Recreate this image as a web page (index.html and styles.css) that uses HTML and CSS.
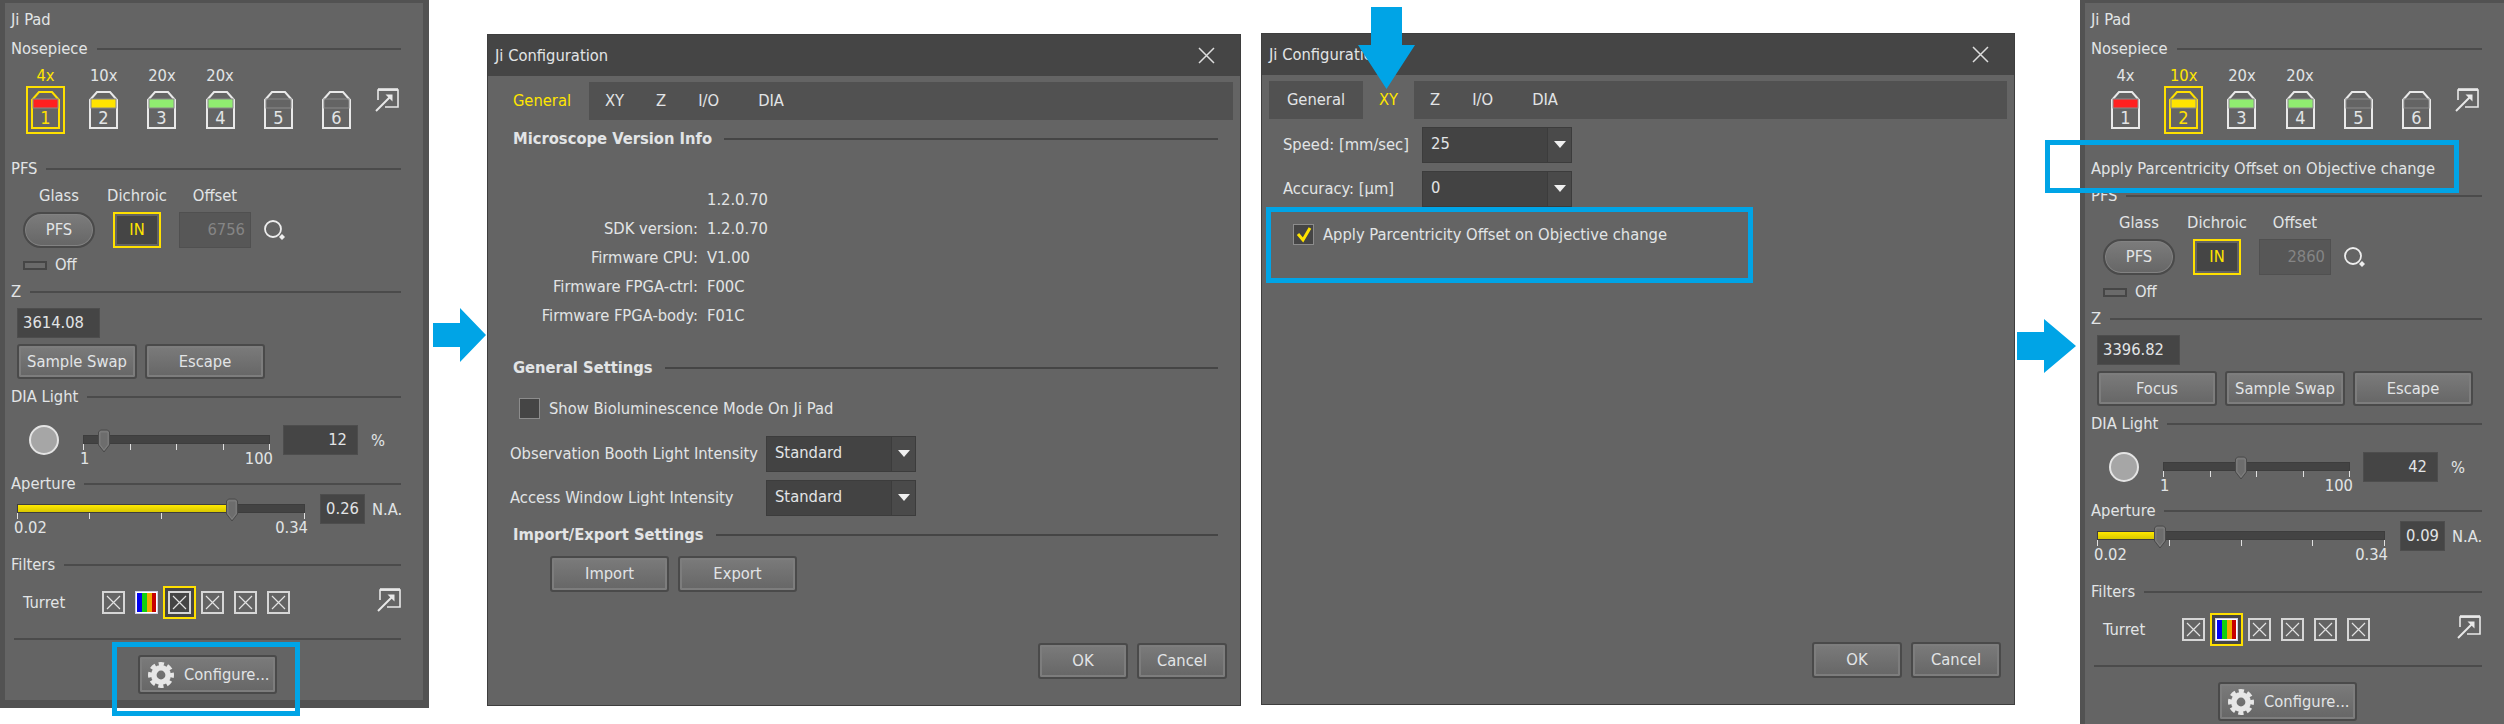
FILE: index.html
```html
<!DOCTYPE html>
<html lang="en">
<head>
<meta charset="utf-8">
<title>Ji Pad configuration</title>
<link rel="stylesheet" href="styles.css">
</head>
<body>
<svg width="0" height="0" class="defs">
  <defs>
    <g id="popout"><path d="M3 12V2H23V19H10" fill="none" stroke="#e8e8e8" stroke-width="1.6"/><path d="M3 1.5H23" stroke="#e8e8e8" stroke-width="2.6"/><path d="M1 23L16 8" stroke="#e8e8e8" stroke-width="2"/><path d="M10.5 6.5H17.5V13.5Z" fill="#e8e8e8"/></g>
    <g id="xbox"><rect x="1" y="1" width="21" height="21" fill="none" stroke="#d6d6d6" stroke-width="2"/><path d="M5 5L18 18M18 5L5 18" stroke="#e2e2e2" stroke-width="1.2"/></g>
    <g id="rainbow"><rect x=".5" y=".5" width="22" height="22" fill="#fff" stroke="#cfcfe8"/><rect x="2" y="2" width="5" height="19" fill="#0000f0"/><rect x="7" y="2" width="5" height="19" fill="#10d010"/><rect x="12" y="2" width="5" height="19" fill="#f0a800"/><rect x="17" y="2" width="4" height="19" fill="#c80000"/></g>
    <g id="thumb"><path d="M1.5 3L3.5 1H10.5L12.5 3V16L7 23L1.5 16Z" fill="#757575" stroke="#4a4a4a"/><path d="M3 3H11V15.5L7 21L3 15.5Z" fill="#6d6d6d" stroke="#868686" stroke-width=".6"/></g>
    <g id="gear"><circle cx="13" cy="13" r="7.2" fill="none" stroke="#e6e6e6" stroke-width="5.6"/><circle cx="13" cy="13" r="11" fill="none" stroke="#e6e6e6" stroke-width="4" stroke-dasharray="5.2 3.44" stroke-dashoffset="2.6"/></g>
    <g id="lens"><circle cx="9" cy="9" r="8" fill="none" stroke="#eeeeee" stroke-width="1.8"/><path d="M18 14L21 17L18 20L15 17Z" fill="#eeeeee"/></g>
  </defs>
</svg>

<section class="panel panel-a">
  <div class="pad-title">Ji Pad</div>
  <div class="head"><span>Nosepiece</span><i></i></div>
  <div class="noses">
    <div class="nose on"><span class="mag">4x</span><div class="slot"><svg width="29" height="38" viewBox="0 0 29 38"><path class="hull" d="M1 37V9L8 1H21L28 9V37Z"/><rect class="band" x="2" y="8" width="25" height="9" fill="#ff2020"/><text x="14.5" y="33" text-anchor="middle">1</text></svg></div></div>
    <div class="nose"><span class="mag">10x</span><div class="slot"><svg width="29" height="38" viewBox="0 0 29 38"><path class="hull" d="M1 37V9L8 1H21L28 9V37Z"/><rect class="band" x="2" y="8" width="25" height="9" fill="#ffe400"/><text x="14.5" y="33" text-anchor="middle">2</text></svg></div></div>
    <div class="nose"><span class="mag">20x</span><div class="slot"><svg width="29" height="38" viewBox="0 0 29 38"><path class="hull" d="M1 37V9L8 1H21L28 9V37Z"/><rect class="band" x="2" y="8" width="25" height="9" fill="#90ec70"/><text x="14.5" y="33" text-anchor="middle">3</text></svg></div></div>
    <div class="nose"><span class="mag">20x</span><div class="slot"><svg width="29" height="38" viewBox="0 0 29 38"><path class="hull" d="M1 37V9L8 1H21L28 9V37Z"/><rect class="band" x="2" y="8" width="25" height="9" fill="#90ec70"/><text x="14.5" y="33" text-anchor="middle">4</text></svg></div></div>
    <div class="nose"><span class="mag"></span><div class="slot"><svg width="29" height="38" viewBox="0 0 29 38"><path class="hull" d="M1 37V9L8 1H21L28 9V37Z"/><rect class="band" x="2" y="8" width="25" height="9" fill="none"/><text x="14.5" y="33" text-anchor="middle">5</text></svg></div></div>
    <div class="nose"><span class="mag"></span><div class="slot"><svg width="29" height="38" viewBox="0 0 29 38"><path class="hull" d="M1 37V9L8 1H21L28 9V37Z"/><rect class="band" x="2" y="8" width="25" height="9" fill="none"/><text x="14.5" y="33" text-anchor="middle">6</text></svg></div></div>
    <svg class="pop pop-nose" width="24" height="24" viewBox="0 0 24 24"><use href="#popout"/></svg>
  </div>
  <div class="head head-pfs"><span>PFS</span><i></i></div>
  <div class="pfs">
    <span class="cap">Glass</span><span class="cap">Dichroic</span><span class="cap">Offset</span><span></span>
    <button class="pill">PFS</button>
    <div class="in"><b>IN</b></div>
    <div class="offset">6756</div>
    <svg width="22" height="21" viewBox="0 0 22 21"><use href="#lens"/></svg>
  </div>
  <div class="off"><i></i><span>Off</span></div>
  <div class="head head-z"><span>Z</span><i></i></div>
  <div class="field zval">3614.08</div>
  <div class="btns"><button class="btn">Sample Swap</button><button class="btn">Escape</button></div>
  <div class="head head-dia"><span>DIA Light</span><i></i></div>
  <div class="dia">
    <div class="lamp"></div>
    <div class="slider dia-slider">
      <div class="track"></div>
      <svg class="thumb" style="left:11%" width="14" height="24" viewBox="0 0 14 24"><use href="#thumb"/></svg>
      <div class="ticks"><i></i><i></i><i></i><i></i><i></i></div>
      <div class="ends"><span>1</span><span>100</span></div>
    </div>
    <div class="field pct">12</div>
    <span class="unit">%</span>
  </div>
  <div class="head head-ap"><span>Aperture</span><i></i></div>
  <div class="ap">
    <div class="slider ap-slider">
      <div class="track"><div class="fill" style="width:74.7%"></div></div>
      <svg class="thumb" style="left:74.7%" width="14" height="24" viewBox="0 0 14 24"><use href="#thumb"/></svg>
      <div class="ticks"><i></i><i></i><i></i><i></i><i></i></div>
      <div class="ends"><span>0.02</span><span>0.34</span></div>
    </div>
    <div class="field na">0.26</div>
    <span class="unit-na">N.A.</span>
  </div>
  <div class="head head-fil"><span>Filters</span><i></i></div>
  <div class="filters">
    <span class="turret">Turret</span>
    <div class="cell"><svg width="23" height="23" viewBox="0 0 23 23"><use href="#xbox"/></svg></div>
    <div class="cell"><svg width="23" height="23" viewBox="0 0 23 23"><use href="#rainbow"/></svg></div>
    <div class="cell on"><svg width="23" height="23" viewBox="0 0 23 23"><use href="#xbox"/></svg></div>
    <div class="cell"><svg width="23" height="23" viewBox="0 0 23 23"><use href="#xbox"/></svg></div>
    <div class="cell"><svg width="23" height="23" viewBox="0 0 23 23"><use href="#xbox"/></svg></div>
    <div class="cell"><svg width="23" height="23" viewBox="0 0 23 23"><use href="#xbox"/></svg></div>
    <svg class="pop pop-fil" width="24" height="24" viewBox="0 0 24 24"><use href="#popout"/></svg>
  </div>
  <div class="sep"></div>
  <button class="btn cfg"><svg width="26" height="26" viewBox="0 0 26 26"><use href="#gear"/></svg><span>Configure...</span></button>
</section>

<section class="dialog d1">
  <div class="titlebar"><span>Ji Configuration</span><svg width="17" height="17" viewBox="0 0 17 17"><path d="M1 1L16 16M16 1L1 16" stroke="#dddddd" stroke-width="1.5"/></svg></div>
  <div class="tabs"><span class="tab sel first">General</span><span class="tab">XY</span><span class="tab">Z</span><span class="tab tab-io">I/O</span><span class="tab">DIA</span><span class="tab-rest"></span></div>
  <div class="shead sh1"><span>Microscope Version Info</span><i></i></div>
  <div class="info">
    <span></span><span>1.2.0.70</span>
    <span>SDK version:</span><span>1.2.0.70</span>
    <span>Firmware CPU:</span><span>V1.00</span>
    <span>Firmware FPGA-ctrl:</span><span>F00C</span>
    <span>Firmware FPGA-body:</span><span>F01C</span>
  </div>
  <div class="shead sh2"><span>General Settings</span><i></i></div>
  <div class="check c1"><span class="box"></span><span>Show Bioluminescence Mode On Ji Pad</span></div>
  <div class="row r1"><span class="rl">Observation Booth Light Intensity</span><div class="select"><span>Standard</span><em></em></div></div>
  <div class="row r2"><span class="rl">Access Window Light Intensity</span><div class="select"><span>Standard</span><em></em></div></div>
  <div class="shead sh3"><span>Import/Export Settings</span><i></i></div>
  <div class="imp"><button class="btn">Import</button><button class="btn">Export</button></div>
  <div class="foot"><button class="btn">OK</button><button class="btn">Cancel</button></div>
</section>

<section class="dialog d2">
  <div class="titlebar"><span>Ji Configuration</span><svg width="17" height="17" viewBox="0 0 17 17"><path d="M1 1L16 16M16 1L1 16" stroke="#dddddd" stroke-width="1.5"/></svg></div>
  <div class="tabs"><span class="tab first">General</span><span class="tab sel">XY</span><span class="tab">Z</span><span class="tab tab-io">I/O</span><span class="tab">DIA</span><span class="tab-rest"></span></div>
  <div class="xrow x1"><span class="xl">Speed: [mm/sec]</span><div class="select"><span>25</span><em></em></div></div>
  <div class="xrow x2"><span class="xl">Accuracy: [µm]</span><div class="select"><span>0</span><em></em></div></div>
  <div class="check c2"><span class="box"><svg width="18" height="18" viewBox="0 0 18 18"><path d="M3 8L8 14L15 2" fill="none" stroke="#ffe400" stroke-width="3"/></svg></span><span>Apply Parcentricity Offset on Objective change</span></div>
  <div class="foot"><button class="btn">OK</button><button class="btn">Cancel</button></div>
</section>

<section class="panel panel-b">
  <div class="pad-title">Ji Pad</div>
  <div class="head"><span>Nosepiece</span><i></i></div>
  <div class="noses">
    <div class="nose"><span class="mag">4x</span><div class="slot"><svg width="29" height="38" viewBox="0 0 29 38"><path class="hull" d="M1 37V9L8 1H21L28 9V37Z"/><rect class="band" x="2" y="8" width="25" height="9" fill="#ff2020"/><text x="14.5" y="33" text-anchor="middle">1</text></svg></div></div>
    <div class="nose on"><span class="mag">10x</span><div class="slot"><svg width="29" height="38" viewBox="0 0 29 38"><path class="hull" d="M1 37V9L8 1H21L28 9V37Z"/><rect class="band" x="2" y="8" width="25" height="9" fill="#ffe400"/><text x="14.5" y="33" text-anchor="middle">2</text></svg></div></div>
    <div class="nose"><span class="mag">20x</span><div class="slot"><svg width="29" height="38" viewBox="0 0 29 38"><path class="hull" d="M1 37V9L8 1H21L28 9V37Z"/><rect class="band" x="2" y="8" width="25" height="9" fill="#90ec70"/><text x="14.5" y="33" text-anchor="middle">3</text></svg></div></div>
    <div class="nose"><span class="mag">20x</span><div class="slot"><svg width="29" height="38" viewBox="0 0 29 38"><path class="hull" d="M1 37V9L8 1H21L28 9V37Z"/><rect class="band" x="2" y="8" width="25" height="9" fill="#90ec70"/><text x="14.5" y="33" text-anchor="middle">4</text></svg></div></div>
    <div class="nose"><span class="mag"></span><div class="slot"><svg width="29" height="38" viewBox="0 0 29 38"><path class="hull" d="M1 37V9L8 1H21L28 9V37Z"/><rect class="band" x="2" y="8" width="25" height="9" fill="none"/><text x="14.5" y="33" text-anchor="middle">5</text></svg></div></div>
    <div class="nose"><span class="mag"></span><div class="slot"><svg width="29" height="38" viewBox="0 0 29 38"><path class="hull" d="M1 37V9L8 1H21L28 9V37Z"/><rect class="band" x="2" y="8" width="25" height="9" fill="none"/><text x="14.5" y="33" text-anchor="middle">6</text></svg></div></div>
    <svg class="pop pop-nose" width="24" height="24" viewBox="0 0 24 24"><use href="#popout"/></svg>
  </div>
  <div class="note">Apply Parcentricity Offset on Objective change</div>
  <div class="head"><span>PFS</span><i></i></div>
  <div class="pfs">
    <span class="cap">Glass</span><span class="cap">Dichroic</span><span class="cap">Offset</span><span></span>
    <button class="pill">PFS</button>
    <div class="in"><b>IN</b></div>
    <div class="offset">2860</div>
    <svg width="22" height="21" viewBox="0 0 22 21"><use href="#lens"/></svg>
  </div>
  <div class="off"><i></i><span>Off</span></div>
  <div class="head head-z"><span>Z</span><i></i></div>
  <div class="field zval">3396.82</div>
  <div class="btns"><button class="btn">Focus</button><button class="btn">Sample Swap</button><button class="btn">Escape</button></div>
  <div class="head head-dia"><span>DIA Light</span><i></i></div>
  <div class="dia">
    <div class="lamp"></div>
    <div class="slider dia-slider">
      <div class="track"></div>
      <svg class="thumb" style="left:41.5%" width="14" height="24" viewBox="0 0 14 24"><use href="#thumb"/></svg>
      <div class="ticks"><i></i><i></i><i></i><i></i><i></i></div>
      <div class="ends"><span>1</span><span>100</span></div>
    </div>
    <div class="field pct">42</div>
    <span class="unit">%</span>
  </div>
  <div class="head head-ap"><span>Aperture</span><i></i></div>
  <div class="ap">
    <div class="slider ap-slider">
      <div class="track"><div class="fill" style="width:21.9%"></div></div>
      <svg class="thumb" style="left:21.9%" width="14" height="24" viewBox="0 0 14 24"><use href="#thumb"/></svg>
      <div class="ticks"><i></i><i></i><i></i><i></i><i></i></div>
      <div class="ends"><span>0.02</span><span>0.34</span></div>
    </div>
    <div class="field na">0.09</div>
    <span class="unit-na">N.A.</span>
  </div>
  <div class="head head-fil"><span>Filters</span><i></i></div>
  <div class="filters">
    <span class="turret">Turret</span>
    <div class="cell"><svg width="23" height="23" viewBox="0 0 23 23"><use href="#xbox"/></svg></div>
    <div class="cell on"><svg width="23" height="23" viewBox="0 0 23 23"><use href="#rainbow"/></svg></div>
    <div class="cell"><svg width="23" height="23" viewBox="0 0 23 23"><use href="#xbox"/></svg></div>
    <div class="cell"><svg width="23" height="23" viewBox="0 0 23 23"><use href="#xbox"/></svg></div>
    <div class="cell"><svg width="23" height="23" viewBox="0 0 23 23"><use href="#xbox"/></svg></div>
    <div class="cell"><svg width="23" height="23" viewBox="0 0 23 23"><use href="#xbox"/></svg></div>
    <svg class="pop pop-fil" width="24" height="24" viewBox="0 0 24 24"><use href="#popout"/></svg>
  </div>
  <div class="sep"></div>
  <button class="btn cfg"><svg width="26" height="26" viewBox="0 0 26 26"><use href="#gear"/></svg><span>Configure...</span></button>
</section>

<svg class="arrow arrow-1" width="54" height="56" viewBox="0 0 54 56"><path d="M0 16H27V1L53 28L27 55V40H0Z"/></svg>
<svg class="arrow arrow-2" width="60" height="56" viewBox="0 0 60 56"><path d="M0 13H27V0L59 27L27 54V41H0Z"/></svg>
<svg class="arrow arrow-3" width="58" height="84" viewBox="0 0 58 84"><path d="M13 0H44V38H57L28.5 82L0 38H13Z"/></svg>
<div class="mark mark-1"></div>
<div class="mark mark-2"></div>
<div class="mark mark-3"></div>
</body>
</html>
```
FILE: styles.css
```css
* { box-sizing: border-box; }
html, body { margin: 0; padding: 0; }
body {
  position: relative;
  width: 2504px;
  height: 724px;
  overflow: hidden;
  background: #fff;
  color: #e2e4e6;
  font-family: "DejaVu Sans Condensed", "DejaVu Sans", sans-serif;
  font-stretch: condensed;
  font-size: 16.4px;
  line-height: 18px;
}
.defs { position: absolute; }
button { font: inherit; color: inherit; padding: 0; margin: 0; }

/* Ji Pad windows */
.panel {
  position: absolute;
  top: 0;
  display: flex;
  flex-direction: column;
  background: #646464;
  border: solid #525252;
  border-width: 3px 6px 8px 5px;
}
.panel-a { left: 0; width: 429px; height: 708px; }
.panel-b { left: 2080px; width: 424px; height: 760px; border-right-width: 0; }
.pad-title { height: 34px; padding: 8px 0 0 6px; }
.head { display: flex; align-items: center; height: 24px; padding: 0 22px 0 6px; flex: none; }
.head span { margin-right: 9px; }
.head i { flex: 1; height: 2px; background: #4b4b4b; }
.noses { display: flex; margin: 6px 0 0 21px; gap: 19.2px; height: 67px; flex: none; }
.nose { width: 39px; display: flex; flex-direction: column; align-items: center; }
.mag { height: 19px; white-space: nowrap; }
.slot { width: 39px; height: 48px; border: 2px solid transparent; display: flex; align-items: center; justify-content: center; }
.hull { fill: none; stroke: #e9e9e9; stroke-width: 2; }
.band { stroke: #8a8a8a; stroke-width: 1; }
.nose text { font-size: 18px; fill: #e2e4e6; }
.nose.on .mag { color: #ffe600; }
.nose.on .slot { border-color: #ffe000; }
.nose.on .hull { stroke: #ffe000; }
.nose.on text { fill: #ffe000; }
.pop { flex: none; }
.pop-nose { margin: 21px 0 0 0; }
.head-pfs { margin-top: 23px; }
.note { height: 50px; padding: 26px 0 0 6px; flex: none; }
.pfs {
  display: grid;
  grid-template-columns: 72px 48px 72px 22px;
  column-gap: 18px;
  grid-template-rows: 18px 36px;
  row-gap: 7px;
  margin: 6px 0 0 18px;
  align-items: center;
  justify-items: center;
  flex: none;
}
.cap { white-space: nowrap; }
.pfs svg { margin-left: -10px; }
.pill {
  width: 72px; height: 36px; border-radius: 18px;
  border: 2px solid #4a4a4a;
  background: linear-gradient(#7c7c7c, #666);
  box-shadow: inset 0 0 0 1px #828282;
}
.in { width: 48px; height: 36px; border: 2px solid #ffe000; padding: 2px; }
.in b { display: flex; height: 100%; align-items: center; justify-content: center; background: #454545; color: #ffe600; font-weight: normal; }
.offset {
  width: 72px; height: 36px; background: #575757; border: 1px solid #505050;
  color: #858585; text-align: right; padding: 8px 5px 0 0;
}
.off { display: flex; align-items: center; height: 18px; margin: 8px 0 0 18px; flex: none; }
.off i { width: 24px; height: 9px; border: 2px solid #464646; background: #6a6a6a; margin-right: 8px; }
.head-z { margin-top: 6px; }
.field { background: #454545; border: 1px solid #4d4d4d; flex: none; }
.zval { width: 83px; height: 30px; margin: 4px 0 0 12px; padding: 5px 0 0 5px; }
.btn {
  border: 2px solid #4a4a4a;
  border-radius: 3px;
  background: linear-gradient(#7b7b7b, #666);
  box-shadow: inset 0 0 0 2px #7d7d7d;
  white-space: nowrap;
  flex: none;
}
.btns { display: flex; gap: 8px; margin: 6px 0 0 12px; flex: none; }
.btns .btn { width: 120px; height: 35px; }
.head-dia { margin-top: 6px; }
.dia { display: flex; margin: 16px 0 0 24px; height: 43px; flex: none; }
.lamp { width: 30px; height: 30px; border-radius: 50%; background: #a6a6a6; border: 2px solid #e4e4e4; margin-right: 24px; }
.slider { position: relative; padding-top: 10px; flex: none; }
.dia-slider { width: 187px; margin-right: 13px; }
.ap-slider { width: 288px; margin-right: 15px; }
.track { height: 9px; background: #434343; border: 1px solid #3d3d3d; }
.fill { height: 100%; background: linear-gradient(#ffe800, #d8c800); }
.thumb { position: absolute; top: 4px; margin-left: -7px; }
.ticks { display: flex; justify-content: space-between; height: 6px; }
.ticks i { width: 1px; background: #e0e0e0; }
.ends { display: flex; justify-content: space-between; margin: 0 -3px; }
.pct { width: 75px; height: 30px; text-align: right; padding: 5px 10px 0 0; }
.unit { margin: 7px 0 0 13px; }
.head-ap { margin-top: 4px; }
.ap { display: flex; margin: -2px 0 0 12px; height: 43px; flex: none; }
.na { width: 45px; height: 30px; text-align: center; padding-top: 5px; }
.unit-na { margin: 7px 0 0 7px; }
.head-fil { margin-top: 16px; }
.filters { display: flex; align-items: center; height: 33px; margin: 9px 0 0 18px; flex: none; }
.turret { width: 74px; }
.cell { width: 33px; height: 33px; display: flex; align-items: center; justify-content: center; border: 2px solid transparent; }
.cell.on { border-color: #ffe000; background: #454545; }
.pop-fil { margin: -5px 0 0 82px; }
.sep { height: 2px; margin: 19px 22px 0 9px; background: #4b4b4b; flex: none; }
.cfg {
  display: flex; align-items: center; width: 139px; height: 39px;
  margin: 15px 0 0 133px; padding-left: 8px;
}
.cfg span { margin-left: 10px; }

/* Configuration dialogs */
.dialog {
  position: absolute;
  width: 754px;
  display: flex;
  flex-direction: column;
  background: #646464;
  border: 1px solid #3e3e3e;
}
.d1 { left: 487px; top: 34px; height: 672px; }
.d2 { left: 1261px; top: 33px; height: 672px; }
.titlebar { display: flex; align-items: center; justify-content: space-between; height: 41px; padding: 0 25px 0 7px; background: #454545; flex: none; }
.tabs { display: flex; height: 38px; margin: 6px 7px 0 7px; flex: none; }
.tab { display: flex; align-items: center; padding: 0 16px; background: #515151; flex: none; }
.tab.first { width: 94px; justify-content: center; padding: 0; }
.tab.sel { background: #646464; color: #ffe600; }
.tab-io { padding-right: 23px; }
.tab-rest { flex: 1; background: #515151; }
.shead { display: flex; align-items: center; height: 24px; padding: 0 22px 0 25px; flex: none; font-weight: bold; }
.shead span { margin-right: 12px; }
.shead i { flex: 1; height: 2px; background: #454545; }
.sh1 { margin-top: 7px; }
.info { display: grid; grid-template-columns: 210px 1fr; column-gap: 9px; grid-auto-rows: 29px; align-items: center; margin-top: 34px; flex: none; }
.info span:nth-child(odd) { text-align: right; }
.sh2 { margin-top: 26px; }
.check { display: flex; align-items: center; height: 21px; flex: none; }
.box { width: 21px; height: 21px; background: #454545; border: 1px solid #8c8c8c; margin-right: 9px; flex: none; display: flex; align-items: center; justify-content: center; }
.c1 { margin: 18px 0 0 31px; }
.c2 { margin: 17px 0 0 31px; }
.row { display: flex; align-items: center; height: 36px; padding-left: 22px; flex: none; }
.rl { width: 256px; white-space: nowrap; }
.r1 { margin-top: 17px; }
.r2 { margin-top: 8px; }
.select {
  position: relative;
  display: flex; align-items: center;
  width: 150px; height: 36px;
  padding: 0 0 3px 8px;
  background: #434343; border: 1px solid #3c3c3c;
  flex: none;
}
.select em { position: absolute; right: 0; top: 0; bottom: 0; width: 24px; border-left: 1px solid #3c3c3c; background: #4a4a4a; }
.select em::after { content: ""; position: absolute; left: 6px; top: 13px; border: solid transparent; border-width: 7px 6px 0; border-top-color: #f0f0f0; }
.sh3 { margin-top: 7px; }
.imp { display: flex; gap: 9px; margin: 9px 0 0 62px; flex: none; }
.imp .btn { width: 119px; height: 36px; }
.foot { display: flex; justify-content: flex-end; gap: 9px; margin-top: auto; padding: 0 13px 26px 0; flex: none; }
.foot .btn { width: 90px; height: 36px; }
.xrow { display: flex; align-items: center; height: 36px; padding-left: 21px; flex: none; }
.xl { width: 139px; white-space: nowrap; }
.x1 { margin-top: 8px; }
.x2 { margin-top: 8px; }

/* Annotations */
.arrow { position: absolute; fill: #00a4e6; }
.arrow-1 { left: 433px; top: 307px; }
.arrow-2 { left: 2017px; top: 319px; }
.arrow-3 { left: 1358px; top: 7px; }
.mark { position: absolute; border: 5px solid #00a4e6; }
.mark-1 { left: 112px; top: 642px; width: 188px; height: 74px; }
.mark-2 { left: 1266px; top: 207px; width: 487px; height: 76px; }
.mark-3 { left: 2045px; top: 140px; width: 414px; height: 53px; }
```
